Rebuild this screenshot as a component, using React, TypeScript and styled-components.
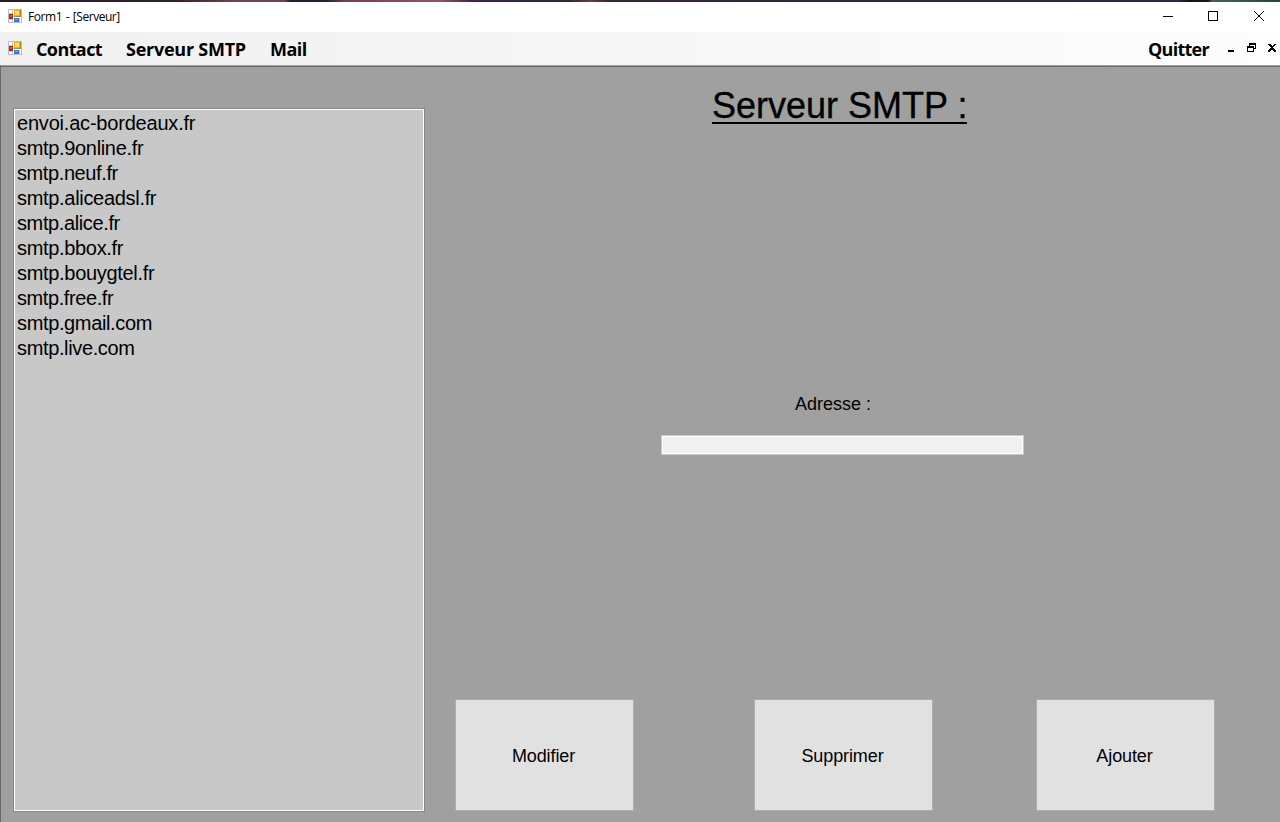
import React from "react";
import styled, { createGlobalStyle } from "styled-components";

const GlobalStyle = createGlobalStyle`
  * { box-sizing: border-box; }
  body { margin: 0; background: #a0a0a0; overflow: hidden; }
`;

const Window = styled.div`
  display: flex;
  flex-direction: column;
  width: 1280px;
  height: 822px;
  color: #000;
  background: #a0a0a0;
  font-family: "Liberation Sans", Arial, sans-serif;
`;

const DesktopEdge = styled.div`
  flex: none;
  height: 2px;
  background: linear-gradient(90deg, #251d2b 0, #30212f 175px, #77435c 240px, #6e4058 285px, #221f30 290px, #251f31 325px, #74404f 345px, #8f536a 440px, #392740 475px, #34263a 570px, #6b3852 590px, #38263b 610px, #30283c 1180px, #151515 1188px, #151515 1208px, #456160 1212px, #2b4044 1280px);
`;

const TitleBar = styled.header`
  flex: none;
  display: flex;
  align-items: center;
  height: 30px;
  padding: 0 0 2px 8px;
  background: #fff;
`;

const WindowTitle = styled.span`
  flex: 1;
  margin-left: 6px;
  padding-top: 1px;
  font: 12px/16px "Open Sans", sans-serif;
  letter-spacing: -0.45px;
  word-spacing: 1px;
`;

const Caption = styled.div<{ $shift?: number }>`
  display: flex;
  align-items: center;
  justify-content: center;
  width: 46px;
  height: 28px;
  padding-left: ${(p) => p.$shift ?? 0}px;
  &:last-child { margin-right: -2px; }
`;

const MenuBar = styled.nav`
  flex: none;
  display: flex;
  align-items: flex-start;
  height: 33px;
  padding: 5px 3px 0 8px;
  background: linear-gradient(90deg, #f0f0f0, #fdfdfd);
  font: 700 18px/24px "Open Sans", sans-serif;
`;

const MenuIcon = styled.div`
  width: 28px;
  padding-top: 4px;
  line-height: 0;
`;

const MenuItem = styled.span<{ $width: number; $gap?: number; $spacing?: number }>`
  width: ${(p) => p.$width}px;
  margin-right: ${(p) => p.$gap ?? 24}px;
  letter-spacing: ${(p) => p.$spacing ?? -0.4}px;
  white-space: nowrap;
`;

const Spacer = styled.div`
  flex: 1;
`;

const ChildControls = styled.div`
  padding-top: 6px;
  line-height: 0;
`;

const Client = styled.main`
  flex: 1;
  display: flex;
  border-top: 1px solid #a0a0a0;
  border-left: 1px solid #696969;
  box-shadow: inset 0 1px #696969;
  padding: 42px 0 0 12px;
`;

const ServerList = styled.ul`
  flex: none;
  width: 412px;
  height: 704px;
  margin: 0;
  padding: 2px 0 0 2px;
  list-style: none;
  background: #c8c8c8;
  border: 1px solid #828790;
  box-shadow: inset 0 0 0 1px #fff;
`;

const ServerItem = styled.li<{ $spacing: number }>`
  height: 25px;
  padding-left: 1px;
  font-size: 20px;
  line-height: 25px;
  letter-spacing: ${(p) => p.$spacing}px;
`;

const Panel = styled.section`
  flex: 1;
  display: flex;
  flex-direction: column;
  margin-top: -24px;
`;

const Heading = styled.h1`
  width: 255px;
  height: 40px;
  margin: 0 0 0 287px;
  padding-top: 1px;
  border-bottom: 2px solid #000;
  font-size: 36px;
  line-height: 41px;
  font-weight: 400;
  -webkit-text-stroke: 0.35px #000;
  white-space: nowrap;
`;

const Field = styled.label`
  display: flex;
  flex-direction: column;
  width: 363px;
  margin: 270px 0 0 236px;
  font-size: 18px;
  line-height: 20px;
`;

const FieldLabel = styled.span`
  margin-left: 134px;
  white-space: nowrap;
`;

const AddressInput = styled.input`
  width: 363px;
  height: 20px;
  margin-top: 21px;
  padding: 0 2px;
  border: 1px solid #c8c8c8;
  box-shadow: inset 0 0 0 1px #fff;
  background: #f0f0f0;
  font: 14px "Liberation Sans", sans-serif;
  outline: none;
`;

const Actions = styled.div`
  display: flex;
  margin: 244px 0 0 30px;
`;

const ActionButton = styled.button<{ $gap?: number }>`
  width: 179px;
  height: 112px;
  margin-right: ${(p) => p.$gap ?? 0}px;
  padding: 1px 2px 0 0;
  border: 1px solid #adadad;
  background: #e1e1e1;
  color: #000;
  font: 18px/20px "Liberation Sans", sans-serif;
  letter-spacing: -0.1px;
`;

const FormIcon = () => (
  <svg width="14" height="14" viewBox="0 0 14 14" shapeRendering="crispEdges">
    <rect x=".5" y=".5" width="13" height="13" fill="#fff" stroke="#bdbdbd" />
    <path d="M4.5 1V13M1 4.5H5M1 10.5H5M11.5 9V13" stroke="#c8c8c8" fill="none" />
    <rect x="1" y="5" width="4" height="5" fill="#b51e1c" />
    <rect x="2" y="6" width="2" height="2" fill="#e85a50" />
    <rect x="6" y="1" width="7" height="7" fill="#b88512" />
    <rect x="6" y="1" width="6" height="6" fill="#e9ae22" />
    <rect x="7" y="2" width="4" height="4" fill="#ffdf70" />
    <rect x="6" y="9" width="5" height="4" fill="#3474d4" />
    <rect x="7" y="10" width="3" height="1" fill="#79aff2" />
  </svg>
);

const servers: [string, number][] = [
  ["envoi.ac-bordeaux.fr", -0.2],
  ["smtp.9online.fr", -0.33],
  ["smtp.neuf.fr", -0.4],
  ["smtp.aliceadsl.fr", -0.31],
  ["smtp.alice.fr", -0.38],
  ["smtp.bbox.fr", -0.33],
  ["smtp.bouygtel.fr", -0.31],
  ["smtp.free.fr", -0.41],
  ["smtp.gmail.com", -0.36],
  ["smtp.live.com", -0.36],
];

export default function App() {
  return (
    <Window>
      <GlobalStyle />
      <DesktopEdge />
      <TitleBar>
        <FormIcon />
        <WindowTitle>Form1 - [Serveur]</WindowTitle>
        <Caption $shift={2}>
          <svg width="10" height="10"><path d="M0 5.5H10" stroke="#000" /></svg>
        </Caption>
        <Caption>
          <svg width="10" height="10"><rect x=".5" y=".5" width="9" height="9" fill="none" stroke="#000" /></svg>
        </Caption>
        <Caption>
          <svg width="10" height="10"><path d="M0 0L10 10M10 0L0 10" stroke="#000" /></svg>
        </Caption>
      </TitleBar>
      <MenuBar>
        <MenuIcon><FormIcon /></MenuIcon>
        <MenuItem $width={66} $spacing={-0.6}>Contact</MenuItem>
        <MenuItem $width={120} $spacing={-0.25}>Serveur SMTP</MenuItem>
        <MenuItem $width={38} $spacing={-0.5}>Mail</MenuItem>
        <Spacer />
        <MenuItem $width={62} $gap={18} $spacing={-0.75}>Quitter</MenuItem>
        <ChildControls>
          <svg width="49" height="10" shapeRendering="crispEdges">
            <path d="M0 7H6V9H0Z" />
            <path d="M21 0H28V6H26V5H27V2H22V3H21ZM19 3H26V9H19ZM20 5V8H25V5Z" fillRule="evenodd" />
            <path d="M40 1H43V2H44V3H45V2H46V1H48V2H47V3H46V4H45V5H46V6H47V7H48V9H46V8H45V7H43V8H42V9H40V7H41V6H42V5H43V4H42V3H41V2H40Z" />
          </svg>
        </ChildControls>
      </MenuBar>
      <Client>
        <ServerList>
          {servers.map(([name, spacing]) => (
            <ServerItem key={name} $spacing={spacing}>{name}</ServerItem>
          ))}
        </ServerList>
        <Panel>
          <Heading>Serveur SMTP :</Heading>
          <Field>
            <FieldLabel>Adresse :</FieldLabel>
            <AddressInput />
          </Field>
          <Actions>
            <ActionButton $gap={120}>Modifier</ActionButton>
            <ActionButton $gap={103}>Supprimer</ActionButton>
            <ActionButton>Ajouter</ActionButton>
          </Actions>
        </Panel>
      </Client>
    </Window>
  );
}
